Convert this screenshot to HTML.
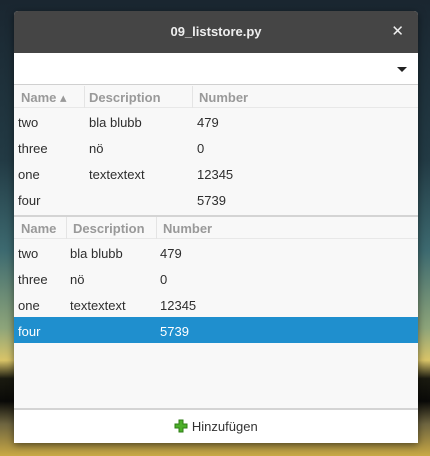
<!DOCTYPE html>
<html><head><style>
*{margin:0;padding:0;box-sizing:border-box}
body{width:430px;height:456px;overflow:hidden;position:relative;font-family:"Liberation Sans","DejaVu Sans",sans-serif;font-size:13px;
background:linear-gradient(180deg,#1a2630 0%,#223a44 35%,#3d6a70 55%,#8ea57a 72%,#d9c468 79%,#1a1a10 83%,#0a0a08 88%,#6e6540 93%,#c9a945 100%)}
.win{position:absolute;left:14px;top:11px;width:404px;height:432px;background:#f8f8f8;border-radius:4px 4px 0 0;overflow:hidden;box-shadow:0 2px 8px rgba(0,0,0,.5)}
.title{height:42px;background:#454545;color:#eee;text-align:center;line-height:42px;font-weight:bold;font-size:13px;position:relative}
.title .x{position:absolute;right:14px;top:0;font-size:15px;color:#eee}
.combo{height:32px;background:#fff;border-bottom:1px solid #d0d0d0;position:relative}
.combo:after{content:"";position:absolute;right:11px;top:14px;border-left:5px solid transparent;border-right:5px solid transparent;border-top:5px solid #222}
.t{position:absolute;left:0;width:404px}
.hdr{height:22px;border-bottom:1px solid #e8e8e8;color:#999;font-weight:bold;position:relative}
.hdr span,.row span{position:absolute;top:0}
.hdr span{line-height:22px;top:1px}
.hdr i{position:absolute;top:0;height:22px;border-left:1px solid #e4e4e4}
.row{height:26px;position:relative;color:#2e2e2e;line-height:26px}
.row span{top:2px}
.sel{background:#1f8fce;color:#fff}
.sep{position:absolute;left:0;top:204px;width:404px;height:2px;background:#d4d4d4}
.btn{position:absolute;left:0;top:397px;width:404px;height:35px;background:#fff;border-top:2px solid #d4d4d4;text-align:center;line-height:33px;color:#333}
</style></head><body>
<div class="win">
<div class="title">09_liststore.py<span class="x">✕</span></div>
<div class="combo"></div>
<div class="t" style="top:75px">
<div class="hdr"><span style="left:7px">Name ▴</span><i style="left:70px"></i><span style="left:75px">Description</span><i style="left:178px"></i><span style="left:185px">Number</span></div>
<div class="row"><span style="left:4px">two</span><span style="left:75px">bla blubb</span><span style="left:183px">479</span></div>
<div class="row"><span style="left:4px">three</span><span style="left:75px">nö</span><span style="left:183px">0</span></div>
<div class="row"><span style="left:4px">one</span><span style="left:75px">textextext</span><span style="left:183px">12345</span></div>
<div class="row"><span style="left:4px">four</span><span style="left:183px">5739</span></div>
</div>
<div class="sep"></div>
<div class="t" style="top:206px">
<div class="hdr"><span style="left:7px">Name</span><i style="left:52px"></i><span style="left:59px">Description</span><i style="left:142px"></i><span style="left:149px">Number</span></div>
<div class="row"><span style="left:4px">two</span><span style="left:56px">bla blubb</span><span style="left:146px">479</span></div>
<div class="row"><span style="left:4px">three</span><span style="left:56px">nö</span><span style="left:146px">0</span></div>
<div class="row"><span style="left:4px">one</span><span style="left:56px">textextext</span><span style="left:146px">12345</span></div>
<div class="row sel"><span style="left:4px">four</span><span style="left:146px">5739</span></div>
</div>
<div class="btn"><svg width="14" height="14" viewBox="0 0 14 14" style="vertical-align:-2px"><path d="M5 1h4v4h4v4H9v4H5V9H1V5h4z" fill="#4caf2a" stroke="#2f7d16" stroke-width="1"/></svg> Hinzufügen</div>
</div>
</body></html>
